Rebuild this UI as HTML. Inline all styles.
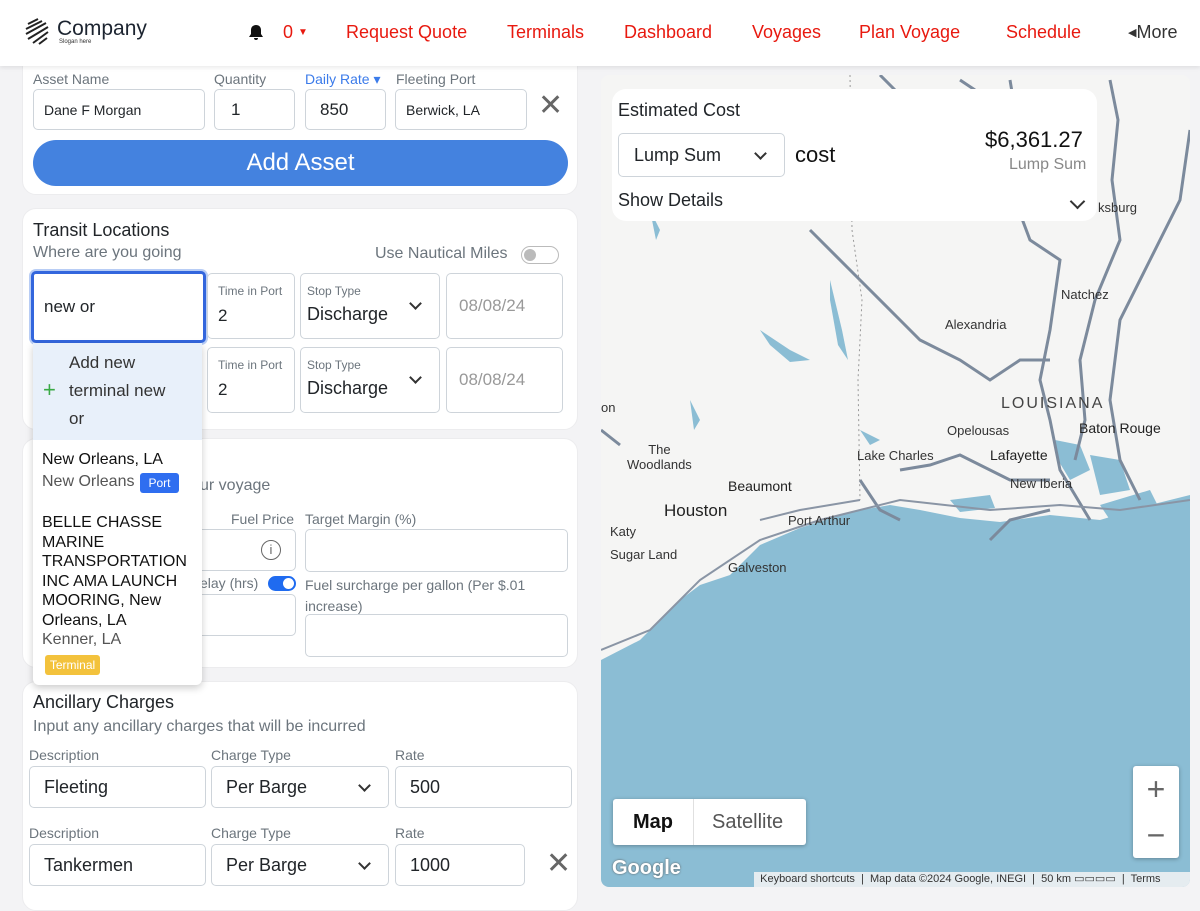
<!DOCTYPE html><html><head><meta charset="utf-8"><style>
*{box-sizing:border-box;margin:0;padding:0}
body{width:1200px;height:895px;overflow:hidden;background:#f3f3f5;font-family:"Liberation Sans",Arial,sans-serif;color:#212529;position:relative}
.a{position:absolute}
.hdr{left:0;top:0;width:1200px;height:66px;background:#fff;box-shadow:0 2px 4px rgba(0,0,0,.08);z-index:5}
.nav{top:22px;font-size:18px;color:#e8190f;z-index:6}
.card{background:#fff;border:1px solid #ececee;border-radius:14px}
.lbl{font-size:14px;color:#6c757d}
.inp{background:#fff;border:1px solid #ced4da;border-radius:5px;font-size:17px;padding-left:10px;display:flex;align-items:center}
.h{font-size:18px;color:#212529}
.chev{width:9px;height:9px;border-right:2px solid #333;border-bottom:2px solid #333;transform:rotate(45deg)}
.x{font-size:30px;color:#666;font-weight:200}
</style></head><body>
<div class="a hdr"></div>
<svg class="a" style="left:24px;top:16px;z-index:6" width="28" height="30" viewBox="0 0 28 30"><g fill="none" stroke="#222" stroke-width="2"><path d="M4 8 L14 3 M2 13 L18 5 M2 18 L22 7 M4 23 L24 11 M9 27 L24 16 M15 28 L23 22"/></g></svg>
<div class="a" style="left:57px;top:17px;font-size:21px;color:#1c2430;z-index:6">Company</div>
<div class="a" style="left:59px;top:39px;font-size:6px;color:#333;z-index:6">Slogan here</div>
<svg class="a" style="left:248px;top:24px;z-index:6" width="16" height="17" viewBox="0 0 16 17"><path d="M8 1c-3 0-5 2-5 5v4l-2 3h14l-2-3V6c0-3-2-5-5-5zM6 14a2 2 0 004 0z" fill="#111"/></svg>
<div class="a nav" style="left:283px">0 <span style="font-size:10px;vertical-align:3px">▼</span></div>
<div class="a nav" style="left:346px">Request Quote</div>
<div class="a nav" style="left:507px">Terminals</div>
<div class="a nav" style="left:624px">Dashboard</div>
<div class="a nav" style="left:752px">Voyages</div>
<div class="a nav" style="left:859px">Plan Voyage</div>
<div class="a nav" style="left:1006px">Schedule</div>
<div class="a nav" style="left:1128px;color:#333"><span style="font-size:11px;vertical-align:2px">◀</span>More</div>

<!-- card 1 -->
<div class="a card" style="left:22px;top:50px;width:556px;height:145px"></div>
<div class="a lbl" style="left:33px;top:71px">Asset Name</div>
<div class="a lbl" style="left:214px;top:71px">Quantity</div>
<div class="a lbl" style="left:305px;top:71px;color:#3b7bea">Daily Rate ▾</div>
<div class="a lbl" style="left:396px;top:71px">Fleeting Port</div>
<div class="a inp" style="left:33px;top:89px;width:172px;height:41px;font-size:14px">Dane F Morgan</div>
<div class="a inp" style="left:214px;top:89px;width:81px;height:41px;padding-left:16px">1</div>
<div class="a inp" style="left:305px;top:89px;width:81px;height:41px;padding-left:14px">850</div>
<div class="a inp" style="left:395px;top:89px;width:132px;height:41px;font-size:14px">Berwick, LA</div>
<div class="a x" style="left:538px;top:88px">✕</div>
<div class="a" style="left:33px;top:140px;width:535px;height:46px;background:#4482df;border-radius:23px;color:#fff;font-size:24px;text-align:center;line-height:46px">Add Asset</div>

<!-- card 2 -->
<div class="a card" style="left:22px;top:208px;width:556px;height:222px"></div>
<div class="a h" style="left:33px;top:220px">Transit Locations</div>
<div class="a" style="left:33px;top:244px;font-size:16px;color:#6c757d">Where are you going</div>
<div class="a" style="left:375px;top:245px;font-size:16px;color:#6c757d">Use Nautical Miles</div>
<div class="a" style="left:521px;top:246px;width:38px;height:18px;border:1px solid #bbb;border-radius:9px"><div style="margin:2px;width:12px;height:12px;border-radius:6px;background:#bbb"></div></div>
<div class="a inp" style="left:31px;top:271px;width:175px;height:72px;border:3px solid #3366dd;box-shadow:0 0 0 2px #b8cdf5">new or</div>
<div class="a inp" style="left:207px;top:273px;width:88px;height:66px;display:block;padding-top:10px"><div style="font-size:12px;color:#6c757d">Time in Port</div><div style="margin-top:8px">2</div></div>
<div class="a inp" style="left:300px;top:273px;width:140px;height:66px;display:block;padding:10px 6px 0"><div style="font-size:12px;color:#6c757d">Stop Type</div><div style="margin-top:6px;font-size:18px">Discharge</div></div>
<div class="a chev" style="left:411px;top:299px"></div>
<div class="a inp" style="left:446px;top:273px;width:117px;height:66px;color:#999;padding-left:12px">08/08/24</div>
<div class="a inp" style="left:207px;top:347px;width:88px;height:66px;display:block;padding-top:10px"><div style="font-size:12px;color:#6c757d">Time in Port</div><div style="margin-top:8px">2</div></div>
<div class="a inp" style="left:300px;top:347px;width:140px;height:66px;display:block;padding:10px 6px 0"><div style="font-size:12px;color:#6c757d">Stop Type</div><div style="margin-top:6px;font-size:18px">Discharge</div></div>
<div class="a chev" style="left:411px;top:373px"></div>
<div class="a inp" style="left:446px;top:347px;width:117px;height:66px;color:#999;padding-left:12px">08/08/24</div>

<!-- card 3 -->
<div class="a card" style="left:22px;top:438px;width:556px;height:230px"></div>
<div class="a" style="left:200px;top:477px;font-size:16px;color:#6c757d">ur voyage</div>
<div class="a lbl" style="left:231px;top:511px">Fuel Price</div>
<div class="a lbl" style="left:305px;top:511px">Target Margin (%)</div>
<div class="a inp" style="left:190px;top:529px;width:106px;height:42px;border-left:none;border-radius:0 5px 5px 0"></div>
<div class="a" style="left:261px;top:540px;width:20px;height:20px;border:1.5px solid #666;border-radius:50%;text-align:center;font-size:13px;line-height:17px;color:#666">i</div>
<div class="a inp" style="left:305px;top:529px;width:263px;height:43px"></div>
<div class="a lbl" style="left:200px;top:575px">elay (hrs)</div>
<div class="a" style="left:268px;top:576px;width:28px;height:15px;background:#1f6bf0;border-radius:8px"><div style="margin:2px 0 0 15px;width:11px;height:11px;border-radius:6px;background:#fff"></div></div>
<div class="a lbl" style="left:305px;top:575px;width:270px;line-height:21px">Fuel surcharge per gallon (Per $.01 increase)</div>
<div class="a inp" style="left:190px;top:594px;width:106px;height:42px;border-left:none;border-radius:0 5px 5px 0"></div>
<div class="a inp" style="left:305px;top:614px;width:263px;height:43px"></div>

<!-- card 4 -->
<div class="a card" style="left:22px;top:681px;width:556px;height:230px"></div>
<div class="a h" style="left:33px;top:692px">Ancillary Charges</div>
<div class="a" style="left:33px;top:718px;font-size:16px;color:#6c757d">Input any ancillary charges that will be incurred</div>
<div class="a lbl" style="left:29px;top:747px">Description</div>
<div class="a lbl" style="left:211px;top:747px">Charge Type</div>
<div class="a lbl" style="left:395px;top:747px">Rate</div>
<div class="a inp" style="left:29px;top:766px;width:177px;height:42px;padding-left:14px;font-size:18px">Fleeting</div>
<div class="a inp" style="left:211px;top:766px;width:178px;height:42px;padding-left:14px;font-size:18px">Per Barge</div>
<div class="a chev" style="left:360px;top:781px"></div>
<div class="a inp" style="left:395px;top:766px;width:177px;height:42px;padding-left:14px;font-size:18px">500</div>
<div class="a lbl" style="left:29px;top:825px">Description</div>
<div class="a lbl" style="left:211px;top:825px">Charge Type</div>
<div class="a lbl" style="left:395px;top:825px">Rate</div>
<div class="a inp" style="left:29px;top:844px;width:177px;height:42px;padding-left:14px;font-size:18px">Tankermen</div>
<div class="a inp" style="left:211px;top:844px;width:178px;height:42px;padding-left:14px;font-size:18px">Per Barge</div>
<div class="a chev" style="left:360px;top:859px"></div>
<div class="a inp" style="left:395px;top:844px;width:130px;height:42px;padding-left:14px;font-size:18px">1000</div>
<div class="a x" style="left:546px;top:846px">✕</div>

<!-- dropdown -->
<div class="a" style="left:33px;top:343px;width:169px;height:342px;background:#fff;border-radius:0 0 6px 6px;box-shadow:0 3px 8px rgba(0,0,0,.2)"></div>
<div class="a" style="left:33px;top:343px;width:169px;height:97px;background:#e8f0fa"></div>
<div class="a" style="left:43px;top:377px;font-size:22px;color:#3aaa45">+</div>
<div class="a" style="left:69px;top:349px;font-size:17px;line-height:28px;color:#333;width:112px">Add new terminal new or</div>
<div class="a" style="left:42px;top:451px;font-size:16px;color:#111">New Orleans, LA</div>
<div class="a" style="left:42px;top:473px;font-size:16px;color:#555">New Orleans</div>
<div class="a" style="left:140px;top:473px;width:39px;height:20px;background:#2f6ef0;color:#fff;border-radius:3px;font-size:12px;text-align:center;line-height:20px">Port</div>
<div class="a" style="left:42px;top:513px;font-size:16px;line-height:19.5px;color:#111;width:150px">BELLE CHASSE MARINE TRANSPORTATION INC AMA LAUNCH MOORING, New Orleans, LA</div>
<div class="a" style="left:42px;top:631px;font-size:16px;color:#555">Kenner, LA</div>
<div class="a" style="left:45px;top:655px;width:55px;height:20px;background:#f3c23c;color:#fff;border-radius:3px;font-size:12px;text-align:center;line-height:20px">Terminal</div>

<!-- map -->
<div class="a" style="left:601px;top:75px;width:589px;height:812px;background:#f5f5f4;overflow:hidden;border-radius:8px">
<svg width="589" height="812" viewBox="601 75 589 812" style="position:absolute;left:0;top:0">
<path fill="#8bbdd4" d="M601 660 L640 640 L680 600 L700 585 L730 575 L760 545 L800 528 L850 512 L890 505 L920 510 L960 518 L1000 522 L1050 515 L1100 520 L1150 505 L1190 495 L1190 887 L601 887Z"/>
<g fill="#8bbdd4"><path d="M760 330 L790 350 L810 360 L790 362 L770 345Z"/><path d="M830 280 L842 330 L848 360 L838 345 L830 300Z"/><path d="M1055 440 L1080 445 L1090 470 L1070 480 L1058 460Z"/><path d="M1090 455 L1120 460 L1130 490 L1100 495Z"/><path d="M1100 505 L1150 490 L1160 510 L1110 520Z"/><path d="M690 400 L700 420 L694 430Z"/><path d="M650 210 L660 230 L656 240Z"/><path d="M860 430 L880 440 L870 445Z"/><path d="M950 500 L990 495 L995 508 L960 512Z"/></g>
<g fill="none" stroke="#7c8a9c" stroke-width="3"><path d="M1010 80 L1020 140 L1015 200 L1030 240 L1060 260 L1050 330 L1040 380 L1050 420 L1060 470 L1090 520"/><path d="M1110 80 L1118 120 L1112 180 L1120 240 L1095 300 L1080 360 L1085 420 L1075 460"/><path d="M1190 130 L1180 200 L1150 260 L1120 320 L1110 400 L1120 460 L1140 500"/><path d="M810 230 L860 280 L900 320 L920 340 L960 360 L990 380 L1020 360 L1050 360"/><path d="M880 75 L895 90 M960 80 L975 90"/><path d="M601 430 L620 445 M900 470 L930 465 L960 455 L1010 480 L1050 480"/><path d="M860 480 L880 510 L900 520 M990 540 L1010 520 L1050 510"/></g>
<g fill="none" stroke="#8a95a5" stroke-width="2"><path d="M601 650 L650 630 L700 580 L760 540 L820 520 L900 500 L990 510 L1060 505 L1120 510 L1190 500"/><path d="M760 520 L800 510 L860 500"/></g>
<path d="M850 75 L852 230 L862 300 L858 380 L860 500" fill="none" stroke="#999" stroke-dasharray="2 3"/>
</svg>
<div class="a" style="left:497px;top:125px;font-size:13px;color:#333">ksburg</div>
<div class="a" style="left:460px;top:212px;font-size:13px;color:#333">Natchez</div>
<div class="a" style="left:344px;top:242px;font-size:13px;color:#333">Alexandria</div>
<div class="a" style="left:400px;top:320px;font-size:16px;letter-spacing:2px;color:#444">LOUISIANA</div>
<div class="a" style="left:346px;top:348px;font-size:13px;color:#333">Opelousas</div>
<div class="a" style="left:478px;top:345px;font-size:14px;color:#222">Baton Rouge</div>
<div class="a" style="left:256px;top:373px;font-size:13px;color:#333">Lake Charles</div>
<div class="a" style="left:389px;top:372px;font-size:14px;color:#222">Lafayette</div>
<div class="a" style="left:409px;top:401px;font-size:13px;color:#333">New Iberia</div>
<div class="a" style="left:0;top:325px;font-size:13px;color:#333">on</div>
<div class="a" style="left:26px;top:367px;font-size:13px;color:#333;text-align:center;line-height:15px">The<br>Woodlands</div>
<div class="a" style="left:127px;top:403px;font-size:14px;color:#222">Beaumont</div>
<div class="a" style="left:63px;top:426px;font-size:17px;color:#222">Houston</div>
<div class="a" style="left:187px;top:438px;font-size:13px;color:#333">Port Arthur</div>
<div class="a" style="left:9px;top:449px;font-size:13px;color:#333">Katy</div>
<div class="a" style="left:9px;top:472px;font-size:13px;color:#333">Sugar Land</div>
<div class="a" style="left:127px;top:485px;font-size:13px;color:#333">Galveston</div>
<div class="a" style="left:11px;top:14px;width:485px;height:132px;background:#fff;border-radius:14px"></div>
<div class="a h" style="left:17px;top:25px;font-size:18px">Estimated Cost</div>
<div class="a inp" style="left:17px;top:58px;width:167px;height:44px;padding-left:15px;font-size:18px">Lump Sum</div>
<div class="a chev" style="left:155px;top:74px"></div>
<div class="a" style="left:194px;top:67px;font-size:22px;color:#111">cost</div>
<div class="a" style="left:384px;top:52px;font-size:22px;color:#111">$6,361.27</div>
<div class="a" style="left:408px;top:81px;font-size:16px;color:#888">Lump Sum</div>
<div class="a" style="left:17px;top:115px;font-size:18px">Show Details</div>
<div class="a chev" style="left:471px;top:121px;width:11px;height:11px"></div>
<div class="a" style="left:12px;top:724px;width:193px;height:46px;background:#fff;border-radius:3px;box-shadow:0 1px 4px rgba(0,0,0,.3);font-size:20px;line-height:46px"><span style="position:absolute;left:20px;font-weight:bold;color:#111">Map</span><span style="position:absolute;left:80px;top:0;width:1px;height:46px;background:#e0e0e0"></span><span style="position:absolute;left:99px;color:#555">Satellite</span></div>
<div class="a" style="left:532px;top:691px;width:46px;height:92px;background:#fff;border-radius:3px;box-shadow:0 1px 4px rgba(0,0,0,.3);font-size:32px;color:#666;text-align:center;line-height:46px">+<br>−</div>
<div class="a" style="left:11px;top:782px;font-size:20px;font-weight:bold;color:#fff;text-shadow:0 0 2px #555">Google</div>
<div class="a" style="left:153px;top:797px;width:436px;height:15px;background:rgba(245,245,245,.85);font-size:11px;color:#333;line-height:15px;white-space:nowrap">&nbsp;&nbsp;Keyboard shortcuts &nbsp;|&nbsp; Map data ©2024 Google, INEGI &nbsp;|&nbsp; 50 km ▭▭▭▭ &nbsp;|&nbsp; Terms</div>
</div>
</body></html>
